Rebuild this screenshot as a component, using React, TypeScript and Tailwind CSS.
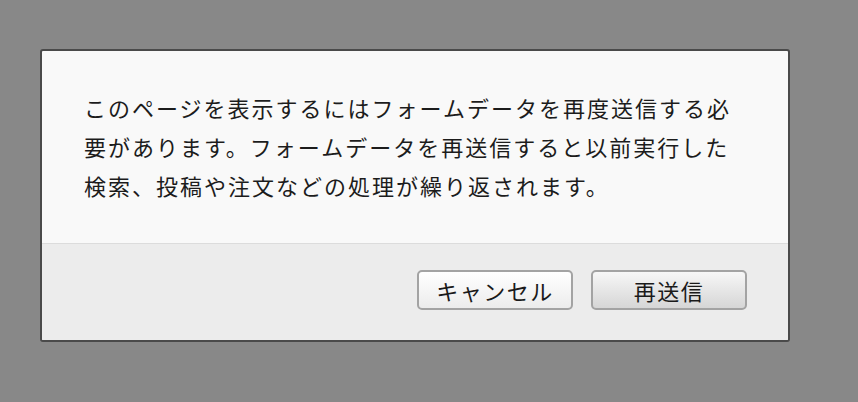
export default function App() {
  return (
    <div
      className="h-[402px] w-[858px] overflow-hidden bg-[#888888] pt-[49px] pl-[40px]"
      style={{ fontFamily: '"Noto Sans CJK JP", "Noto Sans", sans-serif' }}
    >
      <div className="w-[750px] overflow-hidden rounded-[3px] border-2 border-[#4a4a4a] bg-[#f9f9f9]">
        {/* message */}
        <div className="h-[192px] px-[42px] pt-[37px]">
          <p className="text-[22px] leading-[39px] tracking-[2px] text-[#1c1c1c]">
            このページを表示するにはフォームデータを再度送信する必要があります。フォームデータを再送信すると以前実行した検索、投稿や注文などの処理が繰り返されます。
          </p>
        </div>

        {/* buttons */}
        <div className="flex h-[97px] items-center justify-end gap-[18px] border-t border-[#dcdcdc] bg-[#ececec] pr-[41px] pb-[4px]">
          <button
            type="button"
            className="flex h-[40px] w-[156px] items-center justify-center rounded-[5px] border-2 border-[#a3a3a3] bg-gradient-to-b from-[#ffffff] to-[#ececec] text-[22px] tracking-[1.5px] text-[#1a1a1a]"
          >
            キャンセル
          </button>
          <button
            type="button"
            className="flex h-[40px] w-[156px] items-center justify-center rounded-[5px] border-2 border-[#a3a3a3] bg-gradient-to-b from-[#f7f7f7] to-[#d6d6d6] text-[22px] tracking-[1.5px] text-[#1a1a1a]"
          >
            再送信
          </button>
        </div>
      </div>
    </div>
  );
}
